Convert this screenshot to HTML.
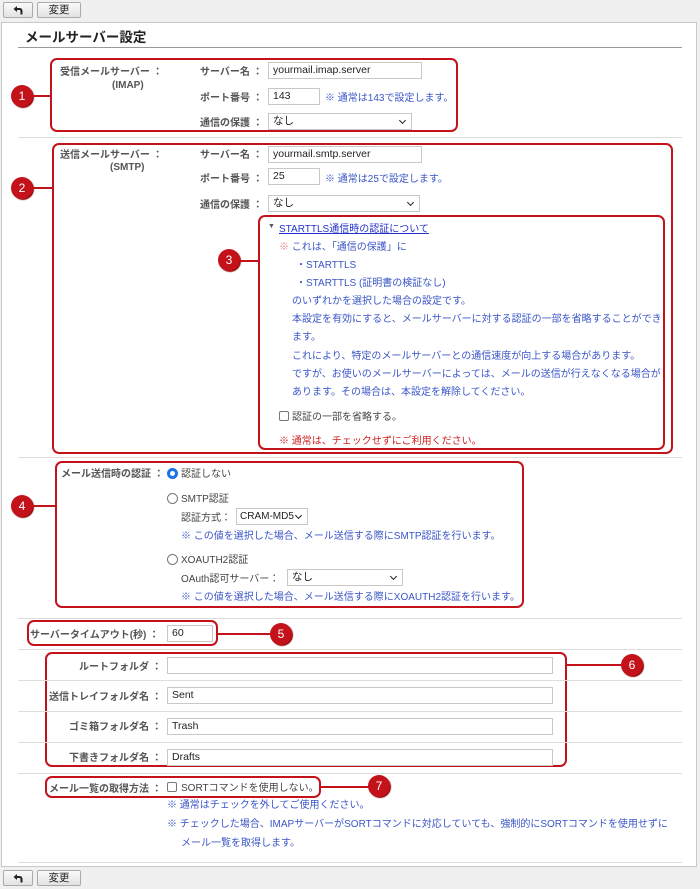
<!DOCTYPE html>
<html><head><meta charset="utf-8"><style>
*{box-sizing:border-box;margin:0;padding:0}
body{width:700px;height:889px;background:#f0f0f0;position:relative;overflow:hidden;font-family:"Liberation Sans","Noto Sans CJK JP",sans-serif;font-size:10px;color:#333}
.a{position:absolute;white-space:nowrap;margin-top:-2px}
.btn{position:absolute;height:16px;border:1px solid #aaa;border-radius:2px;background:linear-gradient(#fafafa,#e2e2e2);font-size:10.5px;text-align:center;line-height:14px;color:#222}
.btn svg{margin-top:2px}
.panel{position:absolute;left:1px;top:22px;width:696px;height:845px;background:#fff;border:1px solid #c8c8c8}
.sep{position:absolute;left:18px;width:664px;height:1px;background:#ddd}
.box{position:absolute;border:2px solid #c4121a;border-radius:7px}
.lbl{position:absolute;white-space:nowrap;font-weight:bold;color:#555;font-size:10px;margin-top:-2px}
.in{position:absolute;height:17px;border:1px solid #c8c8c8;background:#fff;font-size:10.5px;line-height:15px;padding-left:4px;color:#222;white-space:nowrap;overflow:hidden}
.sel::after{content:"";position:absolute;right:6px;top:4px;width:4px;height:4px;border-right:1.5px solid #222;border-bottom:1.5px solid #222;transform:rotate(45deg)}
.blue{color:#3a55c8}
.c{position:absolute;width:22px;height:22px;border-radius:50%;background:#c4121a;color:#fff;font-size:12px;text-align:center;line-height:22px;box-shadow:1px 1px 1px #800}
.ln{position:absolute;height:2px;background:#c4121a}
.cb{position:absolute;width:10px;height:10px;border:1px solid #777;border-radius:2px;background:#fff}
.rd{position:absolute;width:11px;height:11px;border:1px solid #777;border-radius:50%;background:#fff}
</style></head><body>
<div class="btn" style="left:3px;top:2px;width:30px"><svg width="10" height="10" viewBox="0 0 10 10"><path d="M4 1 L0.5 4 L4 7 Z" fill="#222"/><path d="M3 4 H6.5 Q8.5 4 8.5 6.5 V9.5" stroke="#222" stroke-width="2" fill="none"/></svg></div>
<div class="btn" style="left:37px;top:2px;width:44px">変更</div>
<div class="panel"></div>
<div class="a" style="left:25px;top:28px;font-size:13.5px;font-weight:bold;color:#222">メールサーバー設定</div>
<div class="sep" style="top:47px;background:#999"></div>

<div class="box" style="left:50px;top:58px;width:408px;height:74px"></div>
<div class="lbl" style="left:60px;top:65px">受信メールサーバー ：</div>
<div class="lbl" style="left:112px;top:82px">(IMAP)</div>
<div class="lbl" style="left:200px;top:65px">サーバー名 ：</div>
<div class="in" style="left:268px;top:62px;width:154px">yourmail.imap.server</div>
<div class="lbl" style="left:200px;top:91px">ポート番号 ：</div>
<div class="in" style="left:268px;top:88px;width:52px">143</div>
<div class="a blue" style="left:325px;top:91px">※ 通常は143で設定します。</div>
<div class="lbl" style="left:200px;top:116px">通信の保護 ：</div>
<div class="in sel" style="left:268px;top:113px;width:144px">なし</div>
<div class="c" style="left:11px;top:85px">1</div><div class="ln" style="left:33px;top:95px;width:18px"></div>
<div class="sep" style="top:137px"></div>

<div class="box" style="left:52px;top:143px;width:621px;height:311px"></div>
<div class="lbl" style="left:60px;top:148px">送信メールサーバー ：</div>
<div class="lbl" style="left:110px;top:164px">(SMTP)</div>
<div class="lbl" style="left:200px;top:148px">サーバー名 ：</div>
<div class="in" style="left:268px;top:146px;width:154px">yourmail.smtp.server</div>
<div class="lbl" style="left:200px;top:172px">ポート番号 ：</div>
<div class="in" style="left:268px;top:168px;width:52px">25</div>
<div class="a blue" style="left:325px;top:172px">※ 通常は25で設定します。</div>
<div class="lbl" style="left:200px;top:198px">通信の保護 ：</div>
<div class="in sel" style="left:268px;top:195px;width:152px">なし</div>
<div class="c" style="left:11px;top:177px">2</div><div class="ln" style="left:33px;top:187px;width:20px"></div>

<div class="box" style="left:258px;top:215px;width:407px;height:235px"></div>
<div class="c" style="left:218px;top:249px">3</div><div class="ln" style="left:240px;top:260px;width:19px"></div>
<div class="a" style="left:268px;top:225px;font-size:7px;color:#555">▼</div>
<div class="a" style="left:279px;top:222px;color:#2233cc;text-decoration:underline">STARTTLS通信時の認証について</div>
<div class="a blue" style="left:279px;top:240px"><span style="color:#e08080">※</span> これは、「通信の保護」に</div>
<div class="a blue" style="left:296px;top:258px">・STARTTLS</div>
<div class="a blue" style="left:296px;top:276px">・STARTTLS (証明書の検証なし)</div>
<div class="a blue" style="left:292px;top:294px">のいずれかを選択した場合の設定です。</div>
<div class="a blue" style="left:292px;top:312px">本設定を有効にすると、メールサーバーに対する認証の一部を省略することができ</div>
<div class="a blue" style="left:292px;top:330px">ます。</div>
<div class="a blue" style="left:292px;top:349px">これにより、特定のメールサーバーとの通信速度が向上する場合があります。</div>
<div class="a blue" style="left:292px;top:367px">ですが、お使いのメールサーバーによっては、メールの送信が行えなくなる場合が</div>
<div class="a blue" style="left:292px;top:385px">あります。その場合は、本設定を解除してください。</div>
<div class="cb" style="left:279px;top:411px"></div>
<div class="a" style="left:292px;top:410px;color:#444">認証の一部を省略する。</div>
<div class="a" style="left:279px;top:434px;color:#d02020">※ 通常は、チェックせずにご利用ください。</div>
<div class="sep" style="top:457px"></div>

<div class="box" style="left:55px;top:461px;width:469px;height:147px"></div>
<div class="c" style="left:11px;top:495px">4</div><div class="ln" style="left:33px;top:505px;width:23px"></div>
<div class="lbl" style="left:61px;top:467px">メール送信時の認証 ：</div>
<div class="rd" style="left:167px;top:468px;border:3px solid #1a73e8"></div>
<div class="a" style="left:181px;top:467px;color:#444">認証しない</div>
<div class="rd" style="left:167px;top:493px"></div>
<div class="a" style="left:181px;top:492px;color:#444">SMTP認証</div>
<div class="a" style="left:181px;top:511px;color:#444">認証方式：</div>
<div class="in sel" style="left:236px;top:508px;width:72px;padding-left:3px;font-size:10px">CRAM-MD5</div>
<div class="a blue" style="left:181px;top:529px">※ この値を選択した場合、メール送信する際にSMTP認証を行います。</div>
<div class="rd" style="left:167px;top:554px"></div>
<div class="a" style="left:181px;top:553px;color:#444">XOAUTH2認証</div>
<div class="a" style="left:181px;top:572px;color:#444">OAuth認可サーバー：</div>
<div class="in sel" style="left:287px;top:569px;width:116px">なし</div>
<div class="a blue" style="left:181px;top:590px">※ この値を選択した場合、メール送信する際にXOAUTH2認証を行います。</div>
<div class="sep" style="top:618px"></div>

<div class="box" style="left:27px;top:620px;width:191px;height:26px"></div>
<div class="lbl" style="left:30px;top:628px">サーバータイムアウト(秒) ：</div>
<div class="in" style="left:167px;top:625px;width:46px">60</div>
<div class="ln" style="left:218px;top:633px;width:54px"></div>
<div class="c" style="left:270px;top:623px">5</div>
<div class="sep" style="top:649px"></div>

<div class="box" style="left:45px;top:652px;width:522px;height:115px"></div>
<div class="ln" style="left:567px;top:664px;width:56px"></div>
<div class="c" style="left:621px;top:654px">6</div>
<div class="lbl" style="left:79px;top:660px">ルートフォルダ ：</div>
<div class="in" style="left:167px;top:657px;width:386px"></div>
<div class="sep" style="top:680px"></div>
<div class="lbl" style="left:49px;top:690px">送信トレイフォルダ名 ：</div>
<div class="in" style="left:167px;top:687px;width:386px">Sent</div>
<div class="sep" style="top:711px"></div>
<div class="lbl" style="left:69px;top:720px">ゴミ箱フォルダ名 ：</div>
<div class="in" style="left:167px;top:718px;width:386px">Trash</div>
<div class="sep" style="top:742px"></div>
<div class="lbl" style="left:69px;top:751px">下書きフォルダ名 ：</div>
<div class="in" style="left:167px;top:749px;width:386px">Drafts</div>
<div class="sep" style="top:773px"></div>

<div class="box" style="left:45px;top:776px;width:276px;height:22px"></div>
<div class="ln" style="left:321px;top:786px;width:48px"></div>
<div class="c" style="left:368px;top:775px">7</div>
<div class="lbl" style="left:49px;top:782px">メール一覧の取得方法 ：</div>
<div class="cb" style="left:167px;top:782px"></div>
<div class="a" style="left:181px;top:781px;color:#444">SORTコマンドを使用しない。</div>
<div class="a blue" style="left:167px;top:798px">※ 通常はチェックを外してご使用ください。</div>
<div class="a blue" style="left:167px;top:817px">※ チェックした場合、IMAPサーバーがSORTコマンドに対応していても、強制的にSORTコマンドを使用せずに</div>
<div class="a blue" style="left:181px;top:836px">メール一覧を取得します。</div>
<div class="sep" style="top:862px"></div>

<div class="btn" style="left:3px;top:870px;width:30px"><svg width="10" height="10" viewBox="0 0 10 10"><path d="M4 1 L0.5 4 L4 7 Z" fill="#222"/><path d="M3 4 H6.5 Q8.5 4 8.5 6.5 V9.5" stroke="#222" stroke-width="2" fill="none"/></svg></div>
<div class="btn" style="left:37px;top:870px;width:44px">変更</div>
</body></html>
